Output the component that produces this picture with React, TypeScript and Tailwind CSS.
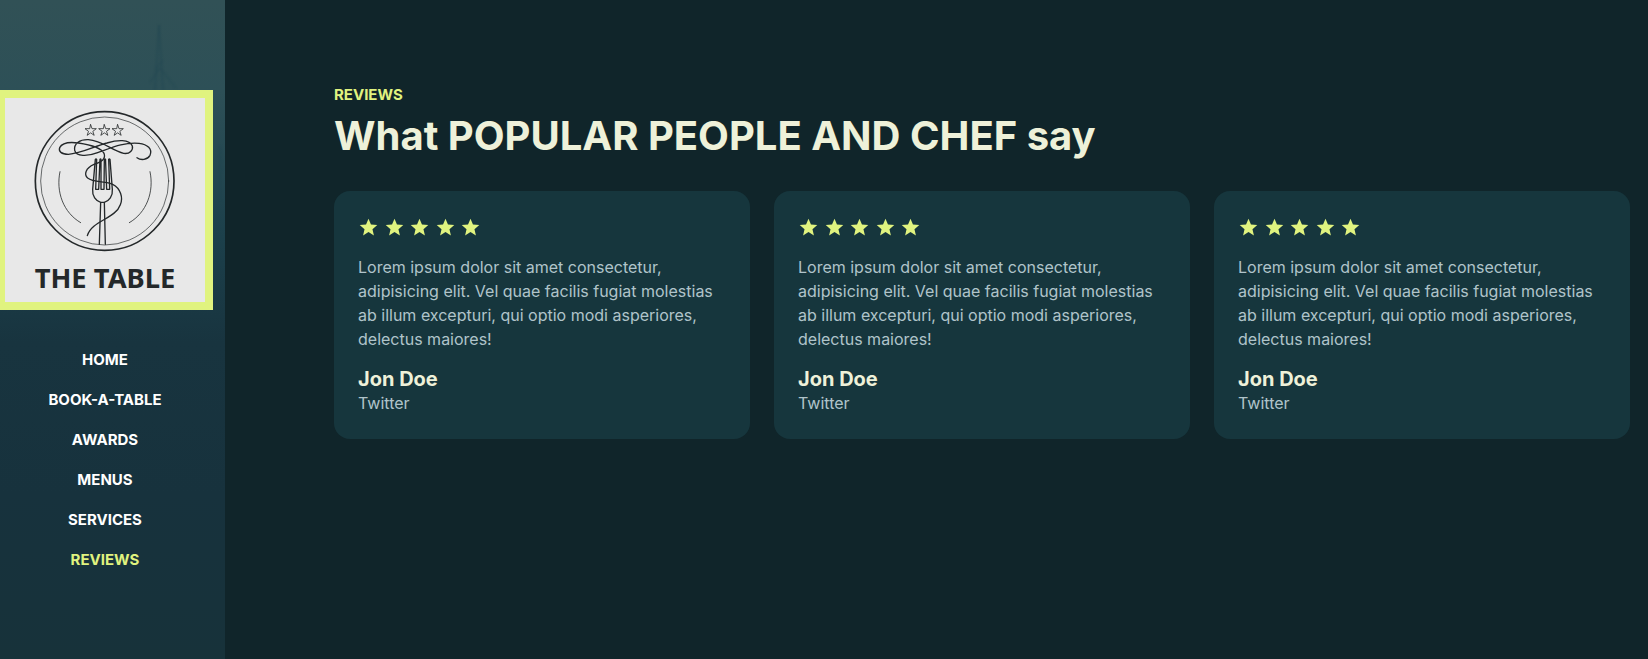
import React from "react";
import { MdStar } from "react-icons/md";

const links = ["Home", "Book-a-table", "Awards", "Menus", "Services", "Reviews"];

const reviews = [
  { id: 1, name: "Jon Doe", source: "Twitter" },
  { id: 2, name: "Jon Doe", source: "Twitter" },
  { id: 3, name: "Jon Doe", source: "Twitter" },
];

const quote =
  "Lorem ipsum dolor sit amet consectetur, adipisicing elit. Vel quae facilis fugiat molestias ab illum excepturi, qui optio modi asperiores, delectus maiores!";

const starPath =
  "M0 -17 L4 -5 L17 -5 L6.5 3 L10.5 15 L0 7.5 L-10.5 15 L-6.5 3 L-17 -5 L-4 -5 Z";

function Logo() {
  return (
    <svg
      viewBox="15 54 600 612"
      className="block h-[204px] w-[200px]"
      fill="none"
      stroke="#24282a"
      strokeLinecap="round"
      strokeLinejoin="round"
      role="img"
      aria-label="The Table"
    >
      <circle cx="314" cy="303" r="208" strokeWidth="5" />
      <circle cx="314" cy="303" r="192" strokeWidth="2" />
      <g strokeWidth="2.4" strokeLinejoin="miter">
        <path d={starPath} transform="translate(272 151)" />
        <path d={starPath} transform="translate(313 151)" />
        <path d={starPath} transform="translate(353 151)" />
      </g>
      <path d="M180 275 C167 335 190 398 242 428" strokeWidth="2.4" />
      <path d="M450 275 C463 335 440 398 388 428" strokeWidth="2.4" />
      <path
        d="M411 233 C423 242 442 240 450 226 C458 207 443 193 417 190 C370 186 335 203 293 218 C262 230 229 230 224 211 C221 190 240 178 265 179 C309 182 335 212 371 220 C390 223 400 209 397 198 C389 176 350 180 321 189 C282 199 243 221 205 223 C184 223 175 214 179 203 C187 187 213 186 235 189 C269 194 304 204 312 220 C319 238 303 246 282 253 C257 264 251 283 263 294 C281 309 318 302 338 313 C362 325 370 354 361 374 C347 416 275 422 262 467"
        strokeWidth="4"
      />
      <g strokeWidth="4">
        <path d="M298 493 L302 367 C288 364 276 348 278 328 L286 238 Q288 235 290 238 L287 328 H296 L300 238 Q301.5 235 303 238 L303 328 H312 L313 238 Q315 235 316.5 238 L320 328 H329 L326 238 Q328 235 330 238 L337 328 C339 348 327 364 313 367 L316 493" />
        <path d="M302 367 H313" />
      </g>
      <text
        x="315"
        y="623"
        textAnchor="middle"
        fill="#24282a"
        stroke="none"
        className="font-['Noto_Sans',sans-serif] text-[82px] font-bold"
      >
        THE TABLE
      </text>
    </svg>
  );
}

function Sidebar() {
  return (
    <aside className="relative flex w-[225px] shrink-0 flex-col items-center overflow-hidden bg-[linear-gradient(to_bottom,#315156_0%,#2d5057_14%,#1c404b_36%,#18343f_52%,#17323d_75%,#17323a_100%)] pt-[90px] pr-[15px]">
      <svg
        className="absolute top-0 right-0 h-[320px] w-[75px] blur-[1px]"
        viewBox="0 0 75 320"
        fill="none"
        stroke="#1c4350"
        strokeOpacity="0.6"
        aria-hidden="true"
      >
        <path d="M9 25 L5 90 M9 25 L13 90 M5 70 L13 60 M-2 85 L10 68 L26 88" />
        <path d="M70 146 L71 172 M70 172 V200" />
      </svg>
      <a href="#home" className="relative shrink-0 border-8 border-[#e0f37f] bg-[#e8e8e8]">
        <Logo />
      </a>
      <nav className="relative mt-[38px] flex flex-col items-center gap-4">
        {links.map((link) => (
          <a
            key={link}
            href={`#${link.toLowerCase()}`}
            className={
              link === "Reviews"
                ? "text-[15px] leading-6 font-bold text-[#e0f37f] uppercase"
                : "text-[15px] leading-6 font-bold text-white uppercase"
            }
          >
            {link}
          </a>
        ))}
      </nav>
    </aside>
  );
}

function ReviewCard({ name, source }: { name: string; source: string }) {
  return (
    <article className="flex flex-col gap-4 rounded-2xl bg-[#16363d] p-6 text-[#b0c4ca]">
      <div className="h-6 text-base leading-[22px] text-[#e0f37f]" role="img" aria-label="5 stars">
        {[1, 2, 3, 4, 5].map((n) => (
          <React.Fragment key={n}>
            <MdStar className="inline" size={21} />{" "}
          </React.Fragment>
        ))}
      </div>
      <p className="text-base leading-6">{quote}</p>
      <div>
        <h3 className="text-xl leading-6 font-bold text-[#eef1d9]">{name}</h3>
        <p className="text-base leading-6">{source}</p>
      </div>
    </article>
  );
}

export default function App() {
  return (
    <div className="flex min-h-screen bg-[#10252a] font-['Inter',sans-serif]">
      <Sidebar />
      <main className="min-w-0 flex-1 pt-[83px] pr-[18px] pl-[109px]">
        <p className="text-[15px] leading-6 font-bold text-[#e0f37f]">REVIEWS</p>
        <h2 className="mt-[5px] text-[40px] leading-12 font-bold text-[#eef1d9]">
          What POPULAR PEOPLE AND CHEF say
        </h2>
        <div className="mt-[31px] grid grid-cols-3 gap-6">
          {reviews.map((review) => (
            <ReviewCard key={review.id} name={review.name} source={review.source} />
          ))}
        </div>
      </main>
    </div>
  );
}
